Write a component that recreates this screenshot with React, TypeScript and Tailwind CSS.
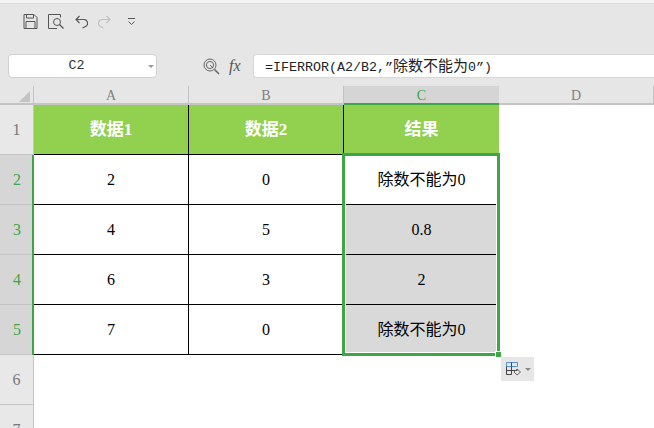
import type { ReactNode } from "react";

const rows = [
  ["2", "0", "除数不能为0"],
  ["4", "5", "0.8"],
  ["6", "3", "2"],
  ["7", "0", "除数不能为0"],
];

function QuickIcons() {
  return (
    <div className="flex items-center pl-[23px] h-[34px] pt-[1px]">
      <svg width="15" height="15" viewBox="0 0 15 15" fill="none" stroke="#555" strokeWidth="1">
        <path d="M1.5 0.5h10l3 3v11h-13z" transform="translate(-0.5 0)" />
        <path d="M3.5 0.5v3.5h7v-3.5M3 14.5v-7h9v7" />
      </svg>
      <svg className="ml-[10px]" width="16" height="15" viewBox="0 0 16 15" fill="none" stroke="#555" strokeWidth="1">
        <path d="M9 14.5H0.5v-14h12v3" />
        <circle cx="9" cy="8" r="3.5" />
        <path d="M11.5 10.5l4 4" strokeWidth="1.3" />
      </svg>
      <svg className="ml-[11px]" width="13" height="14" viewBox="0 0 13 14" fill="none" stroke="#555" strokeWidth="1.1">
        <path d="M1 4.5h7.5a3.7 3.7 0 0 1 1.5 7.2L7.5 13" />
        <path d="M4.5 1L1 4.5 4.5 8" />
      </svg>
      <svg className="ml-[10px]" width="13" height="14" viewBox="0 0 13 14" fill="none" stroke="#c0c0c0" strokeWidth="1.1">
        <path d="M12 4.5H4.5a3.7 3.7 0 0 0-1.5 7.2L5.5 13" />
        <path d="M8.5 1L12 4.5 8.5 8" />
      </svg>
      <svg className="ml-[16px]" width="9" height="9" viewBox="0 0 9 9" fill="none" stroke="#555" strokeWidth="1">
        <path d="M1 1.5h7M1.5 4.5L4.5 7.5 7.5 4.5" />
      </svg>
    </div>
  );
}

function FormulaBar() {
  return (
    <div className="flex items-center h-[24px] mt-[16px]">
      <div className="ml-[8px] w-[149px] h-[24px] bg-white border border-[#d0d0d0] rounded-[4px] flex items-center">
        <span className="flex-1 text-center text-[13.33px] leading-none text-[#333] pr-[4px] font-['Liberation_Mono',monospace]">C2</span>
        <span className="w-0 h-0 border-x-[3px] border-x-transparent border-t-[3px] border-t-[#999] mr-[2px]" />
      </div>
      <svg className="ml-[46px]" width="17" height="17" viewBox="0 0 17 17" fill="none" stroke="#666" strokeWidth="1">
        <circle cx="7" cy="7" r="6" />
        <circle cx="7" cy="7" r="3.6" />
        <path d="M7 7l3 3" />
        <path d="M11.5 11.5l4.5 4.5" strokeWidth="1.6" />
      </svg>
      <span className="ml-[9px] w-[16px] text-[16px] italic leading-none text-[#555]">fx</span>
      <div className="ml-[8px] flex-1 h-[24px] bg-white border border-[#d8d8d8] border-r-0 rounded-l-[4px] flex items-center pl-[11px] text-[#222] whitespace-nowrap font-['Liberation_Mono','Noto_Sans_CJK_SC',monospace]">
        <span className="text-[13.33px] leading-none">
          =IFERROR(A2/B2,”<span className="text-[15px] font-['Noto_Sans_CJK_SC',sans-serif]">除数不能为</span>0”)
        </span>
      </div>
    </div>
  );
}

function ColHead({ label, active }: { label: string; active?: boolean }) {
  return (
    <div
      className={
        active
          ? "h-[19px] pt-[3px] bg-[#d5d5d5] border-b-[2px] border-[#3fa648] flex items-center justify-center text-[14px] text-[#3fa648] leading-none"
          : "h-[19px] pt-[3px] bg-[#e6e6e6] border-r border-b-[2px] border-[#c4c4c4] flex items-center justify-center text-[14px] text-[#808080] leading-none"
      }
    >
      {label}
    </div>
  );
}

function RowHead({ n, active }: { n: number; active?: boolean }) {
  return (
    <div
      className={
        active
          ? "h-[50px] bg-[#d6d6d6] border-b border-[#c4c4c4] flex items-center justify-center text-[16px] text-[#3fa648]"
          : "h-[50px] bg-[#e8e8e8] border-r border-b border-[#c4c4c4] flex items-center justify-center text-[16px] text-[#777]"
      }
    >
      {n}
    </div>
  );
}

function Cell({ children, gray, right }: { children: ReactNode; gray?: boolean; right?: boolean }) {
  return (
    <div
      className={`h-[50px] pt-[1px] border-b border-black flex items-center justify-center text-[16px] text-black ${
        right ? "" : "border-r"
      } ${gray ? "bg-[#d9d9d9]" : "bg-white"}`}
    >
      {children}
    </div>
  );
}

export default function App() {
  return (
    <div className="w-[654px] h-[428px] overflow-hidden bg-[#e6e6e6] font-['Liberation_Serif','Noto_Sans_CJK_SC',serif]">
      <div className="h-[4px] bg-[#f4f4f4] border-b border-[#dcdcdc]" />
      <QuickIcons />
      <FormulaBar />
      <div className="relative mt-[8px] grid grid-cols-[34px_155px_155px_155px_155px] bg-white">
        <div className="h-[19px] bg-[#e6e6e6] border-r border-b-[2px] border-[#c4c4c4] flex items-end justify-end pr-[3px] pb-[1px]">
          <span className="w-0 h-0 border-l-[11px] border-l-transparent border-b-[11px] border-b-[#c4c4c4]" />
        </div>
        <ColHead label="A" />
        <ColHead label="B" />
        <ColHead label="C" active />
        <ColHead label="D" />

        <RowHead n={1} />
        {["数据1", "数据2"].map((t) => (
          <div
            key={t}
            className="h-[50px] pt-[1px] bg-[#92d050] border-r border-b border-black flex items-center justify-center text-[17px] font-bold text-white"
          >
            {t}
          </div>
        ))}
        <div className="h-[50px] pt-[1px] bg-[#92d050] border-b border-black flex items-center justify-center text-[17px] font-bold text-white">
          结果
        </div>
        <div className="h-[50px] bg-white" />

        {rows.map((r, i) => (
          <div key={i} className="contents">
            <RowHead n={i + 2} active />
            <Cell>{r[0]}</Cell>
            <Cell>{r[1]}</Cell>
            <Cell gray={i > 0} right>
              {r[2]}
            </Cell>
            <div className="h-[50px] bg-white" />
          </div>
        ))}

        <RowHead n={6} />
        <div className="col-span-4 h-[50px] bg-white" />
        <RowHead n={7} />
        <div className="col-span-4 h-[50px] bg-white" />

        {/* selection over column C and the row-header edge */}
        <div className="absolute left-[342px] top-[67px] w-[158px] h-[203px] border-[3px] border-[#3fa648] pointer-events-none">
          <div className="absolute inset-0 border border-white" />
          <span className="absolute right-[-4px] bottom-[-4px] w-[6px] h-[6px] bg-[#3fa648] border-t border-l border-white" />
        </div>
        <div className="absolute left-[32px] top-[69px] w-[2px] h-[200px] bg-[#3fa648]" />

        {/* paste options button */}
        <div className="absolute left-[501px] top-[271px] w-[33px] h-[24px] bg-[#e6e6e6] flex items-center pl-[5px] gap-[3px]">
          <svg width="16" height="14" viewBox="0 0 16 14" fill="none" strokeWidth="1">
            <path d="M0.5 0.5h11v4h-11z" stroke="#5b8fd8" />
            <path d="M0.5 4.5v8h5v-8M0.5 8.5h11M5.5 0.5v4" stroke="#444" />
            <path d="M11 7l3.5 3-3.5 3-3-3z" stroke="#666" />
          </svg>
          <span className="w-0 h-0 border-x-[3px] border-x-transparent border-t-[3px] border-t-[#888]" />
        </div>
      </div>
    </div>
  );
}
